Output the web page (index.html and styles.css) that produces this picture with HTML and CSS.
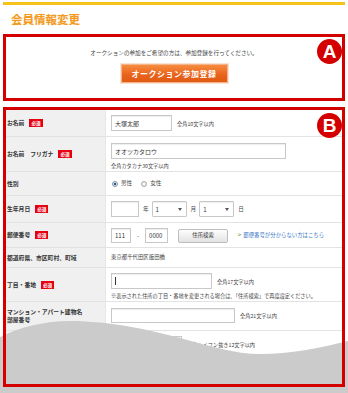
FILE: index.html
```html
<!DOCTYPE html>
<html lang="ja">
<head>
<meta charset="utf-8">
<title>会員情報変更</title>
<link rel="stylesheet" href="styles.css">
</head>
<body>
<div class="page">
  <div class="topline"></div>
  <h1 class="title">会員情報変更</h1>

  <section class="box box-a">
    <p class="lead">オークションの参加をご希望の方は、参加登録を行ってください。</p>
    <div class="btn-wrap"><span class="btn-primary">オークション参加登録</span></div>
    <span class="marker">A</span>
  </section>

  <section class="box box-b">
    <div class="form">
      <div class="row r1">
        <div class="label">お名前<span class="req">必須</span></div>
        <div class="value"><div class="line"><span class="input w61">大塚太郎</span><span class="note">全角10文字以内</span></div></div>
      </div>
      <div class="row r2">
        <div class="label">お名前　フリガナ<span class="req">必須</span></div>
        <div class="value"><div class="line"><span class="input w175">オオツカタロウ</span></div><span class="note sub">全角カタカナ30文字以内</span></div>
      </div>
      <div class="row r3">
        <div class="label">性別</div>
        <div class="value"><div class="line"><span class="radio on"></span><span class="rtext">男性</span><span class="radio"></span><span class="rtext">女性</span></div></div>
      </div>
      <div class="row r4">
        <div class="label">生年月日<span class="req">必須</span></div>
        <div class="value"><div class="line"><span class="input w28"></span><span class="unit">年</span><span class="input select w35">1<i class="arrow"></i></span><span class="unit">月</span><span class="input select w35">1<i class="arrow"></i></span><span class="unit">日</span></div></div>
      </div>
      <div class="row r5">
        <div class="label">郵便番号<span class="req">必須</span></div>
        <div class="value"><div class="line"><span class="input w20">111</span><span class="dash">-</span><span class="input w23">0000</span><span class="btn-sub">住所検索</span><a class="link" href="#"><span class="chev">&gt;</span>郵便番号が分からない方はこちら</a></div></div>
      </div>
      <div class="row r6">
        <div class="label">都道府県、市区町村、町域</div>
        <div class="value"><span class="plain">東京都千代田区飯田橋</span></div>
      </div>
      <div class="row r7">
        <div class="label">丁目・番地<span class="req">必須</span></div>
        <div class="value"><div class="line"><span class="input w101"><i class="caret"></i></span><span class="note">全角17文字以内</span></div><span class="note sub">※表示された住所の丁目・番地を変更される場合は、「住所検索」で再度設定ください。</span></div>
      </div>
      <div class="row r8">
        <div class="label">マンション・アパート建物名<br>部屋番号</div>
        <div class="value"><div class="line"><span class="input w124"></span><span class="note">全角21文字以内</span></div></div>
      </div>
      <div class="row r9">
        <div class="label">電話番号</div>
        <div class="value"><div class="line"><span class="input w71"></span><span class="note">全角ハイフン抜き12文字以内</span></div></div>
      </div>
    </div>
    <span class="marker">B</span>
  </section>

  <svg class="fade" width="348" height="393" viewBox="0 0 348 393" aria-hidden="true">
    <path d="M0,337 C20,327 45,321 70,321 C110,321 150,330 180,338 C210,346 235,354 260,354 C290,354 320,348 348,341 V393 H0 Z" fill="#cbcbcb"/>
  </svg>
</div>
</body>
</html>
```

FILE: styles.css
```css
* { box-sizing: border-box; }

html, body {
  margin: 0;
  padding: 0;
  background: #ffffff;
}

body {
  font-family: "Noto Sans CJK JP", "Noto Sans", sans-serif;
  color: #333333;
  width: 348px;
  height: 393px;
  overflow: hidden;
}

.page {
  position: relative;
  width: 348px;
  height: 393px;
  padding-top: 2px;
}

.topline {
  height: 3px;
  margin: 0 3px;
  background: #f5c21a;
}

.title {
  margin: 0;
  height: 29px;
  line-height: 29px;
  padding-left: 11px;
  font-size: 11.5px;
  font-weight: bold;
  color: #f3991f;
  letter-spacing: 0;
  text-shadow: 0 0 2px #fff3dc;
}

.box {
  position: relative;
  margin: 0 3px;
  border: 3px solid #d40000;
  background: #ffffff;
}

.box-a {
  height: 67px;
  padding-top: 13px;
}

.lead {
  margin: 0;
  text-align: center;
  font-size: 5.6px;
  line-height: 7px;
  color: #444444;
}

.btn-wrap {
  display: flex;
  justify-content: center;
  margin-top: 7px;
}

.btn-primary {
  display: flex;
  align-items: center;
  justify-content: center;
  width: 107px;
  height: 19px;
  background: linear-gradient(#f68c3e, #e8621c 60%, #e25a14);
  border: 1px solid #f3b38c;
  box-shadow: 0 0 0 1px #fbe2d2;
  color: #ffffff;
  font-size: 8px;
  font-weight: bold;
  letter-spacing: 0.5px;
}

.marker {
  position: absolute;
  top: 2px;
  right: 0;
  width: 25px;
  height: 25px;
  border-radius: 50%;
  background: #d40000;
  color: #ffffff;
  font-family: "Liberation Sans", Arial, sans-serif;
  font-weight: bold;
  font-size: 19px;
  line-height: 25px;
  text-align: center;
  z-index: 4;
}

.box-b {
  margin-top: 6px;
  height: 280px;
  border: none;
  padding: 3px;
}

.box-b::after {
  content: "";
  position: absolute;
  inset: 0;
  border: 3px solid #d40000;
  z-index: 3;
  pointer-events: none;
}

.box-b .marker {
  top: 6px;
  right: 3px;
}

.form {
  height: 274px;
  overflow: hidden;
}

.row {
  display: grid;
  grid-template-columns: 100px 1fr;
  border-bottom: 1px solid #e3e3e3;
}

.label {
  display: flex;
  align-items: center;
  flex-wrap: wrap;
  background: #f0f0f0;
  padding-left: 1px;
  font-size: 5.8px;
  line-height: 8px;
  font-weight: bold;
  color: #333333;
  border-right: 1px solid #e6e6e6;
}

.req {
  display: inline-block;
  margin-left: 5px;
  padding: 0 2px;
  height: 8px;
  line-height: 8px;
  background: #e60012;
  color: #ffffff;
  font-size: 4.6px;
  font-weight: bold;
}

.value {
  display: flex;
  flex-direction: column;
  justify-content: center;
  padding: 5px 5px;
  font-size: 5.2px;
  line-height: 7px;
}

.line {
  display: flex;
  align-items: center;
}

.input {
  position: relative;
  display: inline-flex;
  align-items: center;
  height: 16px;
  border: 1px solid #c8c8c8;
  background: #ffffff;
  padding-left: 3px;
  font-size: 6px;
  color: #333333;
  box-shadow: inset 0 1px 1px #eeeeee;
}

.w20 { width: 20px; }
.w23 { width: 23px; }
.w28 { width: 28px; }
.w35 { width: 35px; }
.w61 { width: 61px; }
.w71 { width: 71px; }
.w101 { width: 101px; }
.w124 { width: 124px; }
.w175 { width: 175px; }

.select {
  border-radius: 1px;
}

.arrow {
  position: absolute;
  right: 4px;
  top: 6px;
  width: 0;
  height: 0;
  border-left: 2px solid transparent;
  border-right: 2px solid transparent;
  border-top: 3px solid #555555;
}

.caret {
  display: block;
  width: 1px;
  height: 8px;
  background: #333333;
}

.note {
  margin-left: 5px;
  color: #444444;
  white-space: nowrap;
}

.note.sub {
  margin-left: 0;
  margin-top: 3px;
}

.unit {
  margin: 0 3px 0 4px;
  font-size: 5.6px;
  color: #444444;
}

.dash {
  margin: 0 6px;
  font-size: 6px;
}

.r1 .value { padding: 5px 5px 5px; }
.r2 .value { padding: 6px 5px 2px; }
.r3 .value { padding: 8px 5px 8px; }
.r4 .value { padding: 5px 5px 5px; }
.r5 .value { padding: 5px 5px 4px; }
.r5 .input { height: 15px; }
.r6 .value { padding: 6px 5px 6px; }
.r7 .value { padding: 5px 5px 2px; }
.r8 .value { padding: 6px 5px 7px; }
.r8 .input { height: 15px; }
.r9 .value { padding: 5px 5px 10px; }

.radio {
  width: 6px;
  height: 6px;
  margin-left: 1px;
  border-radius: 50%;
  border: 1px solid #a8a8a8;
  background: radial-gradient(circle, #ffffff 0, #dddddd 100%);
}

.radio.on {
  background: radial-gradient(circle, #2a5f8f 0 1.4px, #dfe8f0 1.6px);
  border-color: #8a9aa8;
}

.rtext {
  margin: 0 8px 0 3px;
  font-size: 5.6px;
  color: #444444;
}

.btn-sub {
  display: inline-flex;
  align-items: center;
  justify-content: center;
  width: 50px;
  height: 14px;
  margin-left: 10px;
  border: 1px solid #bdbdbd;
  border-radius: 2px;
  background: linear-gradient(#fdfdfd, #e3e3e3);
  font-size: 5.4px;
  color: #333333;
}

.link {
  margin-left: 10px;
  color: #3a78c8;
  text-decoration: none;
  font-size: 5.4px;
}

.chev {
  color: #6aa629;
  font-weight: bold;
  margin-right: 2px;
}

.plain {
  font-size: 5.4px;
  color: #444444;
}

.fade {
  position: absolute;
  left: 0;
  top: 0;
  z-index: 2;
  pointer-events: none;
}
```
